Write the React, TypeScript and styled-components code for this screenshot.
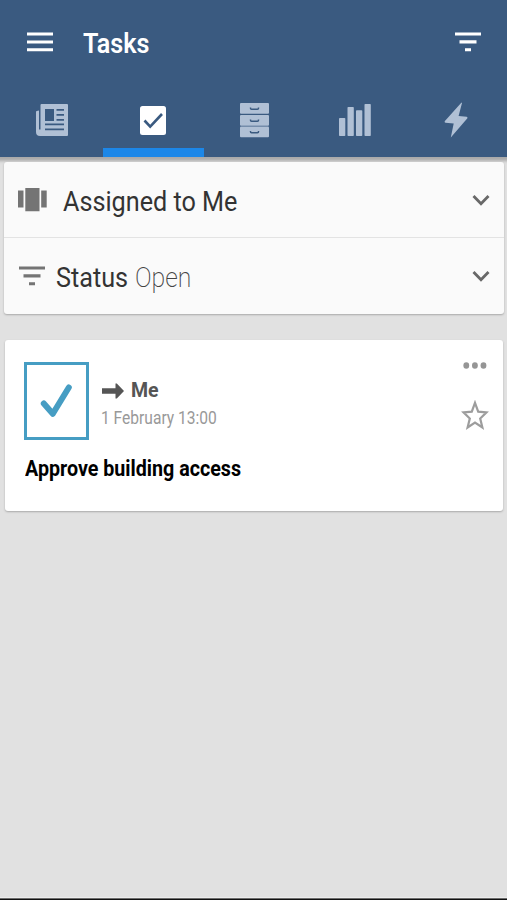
import React from "react";
import styled, { createGlobalStyle } from "styled-components";

const GlobalStyle = createGlobalStyle`
  *, *::before, *::after { box-sizing: border-box; }
  html, body { margin: 0; background: #e1e1e1; }
  body { font-family: Roboto, "Liberation Sans", sans-serif; }
  button { border: 0; padding: 0; background: none; font: inherit; color: inherit; }
  svg { display: block; flex: none; }
`;

const Screen = styled.div`
  display: flex;
  flex-direction: column;
  width: 507px;
  height: 900px;
  overflow: hidden;
  background: #e1e1e1;
`;

const Header = styled.header`
  flex: none;
  height: 157px;
  display: flex;
  flex-direction: column;
  background: #3a5a80;
  box-shadow: 0 1px 3px 3px #aaaaaa;
`;

const Toolbar = styled.div`
  height: 83px;
  padding: 0 26px 0 27px;
  display: flex;
  align-items: center;
`;

const IconButton = styled.button`
  display: grid;
  place-items: center;
`;

const Label = styled.span<{ $size: number; $stretch: number; $weight?: number; $color: string }>`
  display: block;
  white-space: nowrap;
  font-size: ${(p) => p.$size}px;
  line-height: 1.2;
  font-weight: ${(p) => p.$weight ?? 400};
  color: ${(p) => p.$color};
  transform: scaleX(${(p) => p.$stretch});
  transform-origin: left center;
`;

const Title = styled.h1`
  flex: 1;
  margin: 3px 0 0 30px;
`;

const Tabs = styled.nav`
  flex: 1;
  padding-left: 2px;
  display: grid;
  grid-template-columns: repeat(5, 101px);
`;

const Tab = styled.button<{ $active?: boolean }>`
  display: grid;
  place-items: center;
  border-bottom: 9px solid ${(p) => (p.$active ? "#1c87e8" : "transparent")};
  padding: 9px 1px 0 0;
  color: ${(p) => (p.$active ? "#ffffff" : "#b0c0d5")};
`;

const Filters = styled.section`
  flex: none;
  margin: 5px 3px 0 4px;
  height: 152px;
  border-radius: 3px;
  background: #fafafa;
  box-shadow: 0 1px 2px #a8a8a8;
`;

const FilterRow = styled.div<{ $inset: number }>`
  height: 76px;
  display: flex;
  align-items: center;
  padding: 0 14px 0 ${(p) => p.$inset}px;
  & + & {
    height: 77px;
    margin-top: -1px;
    border-top: 1px solid #e3e3e3;
  }
`;

const FilterText = styled.div<{ $gap: number }>`
  flex: 1;
  display: flex;
  margin: 3px 0 0 ${(p) => p.$gap}px;
`;

const StatusName = styled.div`
  width: 79px;
`;

const TaskCard = styled.article`
  flex: none;
  margin: 26px 4px 0 5px;
  height: 171px;
  padding: 22px 15px 0 19px;
  border-radius: 3px;
  background: #ffffff;
  box-shadow: 0 1px 2px #a8a8a8;
`;

const TaskTop = styled.div`
  height: 78px;
  display: flex;
`;

const TaskType = styled.div`
  width: 65px;
  height: 78px;
  border: 3px solid #469dc3;
  display: grid;
  place-items: center;
`;

const TaskInfo = styled.div`
  flex: 1;
  padding: 17px 0 0 12px;
`;

const Assignee = styled.div`
  display: flex;
  align-items: center;
  gap: 7px;
  height: 24px;
  padding-left: 1px;
`;

const TaskDate = styled.div`
  margin-top: 5px;
`;

const Actions = styled.div`
  width: 26px;
  display: flex;
  flex-direction: column;
  align-items: center;
  gap: 31px;
`;

const TaskTitle = styled.h2`
  margin: 16px 0 0 1px;
`;

const BottomEdge = styled.div`
  flex: none;
  height: 3px;
  margin-top: auto;
  background: linear-gradient(#ececec 0 1px, #6c6c6c 1px 2px, #111111 2px);
`;

const FilterIcon = ({ color }: { color: string }) => (
  <svg width="26" height="20" viewBox="0 0 26 20" fill={color}>
    <path d="M0 .5h26v3H0zM4.5 8.300h17v3.200h-17zM10 16.200h6v3h-6z" />
  </svg>
);

const Chevron = () => (
  <svg width="18" height="13" viewBox="0 0 18 13" fill="none" stroke="#686868" strokeWidth="2.8">
    <path d="M1.500 2 9 9.800 16.500 2" />
  </svg>
);

const NewsIcon = () => (
  <svg width="32" height="32" viewBox="0 0 32 32" fill="currentColor">
    <path
      fillRule="evenodd"
      d="M5.500 0H31q1 0 1 1v30q0 1-1 1H4Q0 32 0 28V8Q0 6.500 3 6.500V25.500H4.500V1q0-1 1-1ZM9 5V17h9V5ZM20.500 5v1.800H28V5ZM20.500 10v1.800H28V10ZM20.500 15v1.800H28V15ZM9 19.500v1.800H28v-1.800ZM9 24.500v1.800H28v-1.800Z"
    />
  </svg>
);

const CheckIcon = () => (
  <svg width="26" height="29" viewBox="0 0 26 29">
    <rect width="26" height="29" rx="2.500" fill="currentColor" />
    <path d="m4.500 14.500 5.700 6.200L22 8" fill="none" stroke="#3a5a80" strokeWidth="2.600" />
  </svg>
);

const DrawersIcon = () => (
  <svg width="29" height="35" viewBox="0 0 29 35">
    {[0, 12, 23.5].map((y) => (
      <g key={y} transform={`translate(0 ${y})`}>
        <rect width="29" height="10.700" rx="1" fill="currentColor" />
        <path d="M10.500 4.600v.6q0 1 1 1h6q1 0 1-1v-.6" fill="none" stroke="#3a5a80" strokeWidth="1.500" />
      </g>
    ))}
  </svg>
);

const BarsIcon = () => (
  <svg width="32" height="32" viewBox="0 0 32 32" fill="currentColor">
    <rect y="14" width="6.300" height="18" rx=".8" />
    <rect x="8.500" y="3" width="6.300" height="29" rx=".8" />
    <rect x="17" y="6.300" width="6.300" height="25.700" rx=".8" />
    <rect x="25.500" width="6.300" height="32" rx=".8" />
  </svg>
);

const BoltIcon = () => (
  <svg width="24" height="36" viewBox="0 0 24 36" fill="currentColor">
    <path d="M17.500.5.700 19.200q-.4 1.300.8 1.600l8.200.7L6.800 35.500 23.400 16.300q.4-1.200-.8-1.500l-8-.7L18 1Z" />
  </svg>
);

const CarouselIcon = () => (
  <svg width="29" height="25" viewBox="0 0 29 25" fill="#747474">
    <path d="M0 2.500h5.500v17H0zM7.300-.400h14.200v23.700H7.300zM23.200 2.500h5.500v17h-5.500z" />
  </svg>
);

const MenuIcon = () => (
  <svg width="26" height="20" viewBox="0 0 26 20" fill="#fff">
    <path d="M0 .5h26v3H0zM0 8.400h26v3H0zM0 16.200h26v3H0z" />
  </svg>
);

const TaskCheck = () => (
  <svg width="34" height="36" viewBox="0 0 34 36" fill="none" stroke="#469dc3">
    <path d="m3.800 20.500 9 10.300L28.800 4.500" strokeWidth="6" strokeLinecap="round" strokeLinejoin="round" />
  </svg>
);

const ArrowIcon = () => (
  <svg width="22" height="16" viewBox="0 0 22 16" fill="#555">
    <path d="M0 5.200h13.500V.5h1.300L22 8l-7.200 7.500h-1.300v-4.700H0z" />
  </svg>
);

const StarIcon = () => (
  <svg width="28" height="30" viewBox="0 0 28 30" fill="none" stroke="#9d9d9d" strokeWidth="2.200">
    <path d="m14 2.800 3.200 8.800 8.300.7-6.300 6.200 2.200 9L14 22.600l-7.400 4.900 2.200-9-6.300-6.200 8.300-.7Z" />
  </svg>
);

const DotsIcon = () => (
  <svg width="24" height="7" viewBox="0 0 24 7" fill="#959595">
    <ellipse cx="3.300" cy="3.500" rx="2.900" ry="3.200" />
    <ellipse cx="11.900" cy="3.500" rx="2.900" ry="3.200" />
    <ellipse cx="20.500" cy="3.500" rx="2.900" ry="3.200" />
  </svg>
);

export default function App() {
  return (
    <>
      <GlobalStyle />
      <Screen>
        <Header>
          <Toolbar>
            <IconButton aria-label="Menu"><MenuIcon /></IconButton>
            <Title><Label $size={27.5} $stretch={0.915} $weight={600} $color="#fff">Tasks</Label></Title>
            <IconButton aria-label="Filter"><FilterIcon color="#fff" /></IconButton>
          </Toolbar>
          <Tabs>
            <Tab aria-label="News"><NewsIcon /></Tab>
            <Tab aria-label="Tasks" $active><CheckIcon /></Tab>
            <Tab aria-label="Files"><DrawersIcon /></Tab>
            <Tab aria-label="Reports"><BarsIcon /></Tab>
            <Tab aria-label="Actions"><BoltIcon /></Tab>
          </Tabs>
        </Header>
        <Filters>
          <FilterRow $inset={14}>
            <CarouselIcon />
            <FilterText $gap={16}>
              <Label $size={28} $stretch={0.9} $color="#333">Assigned to Me</Label>
            </FilterText>
            <Chevron />
          </FilterRow>
          <FilterRow $inset={15}>
            <FilterIcon color="#747474" />
            <FilterText $gap={11}>
              <StatusName><Label $size={28} $stretch={0.9} $color="#333">Status</Label></StatusName>
              <Label $size={28} $stretch={0.885} $weight={200} $color="#444">Open</Label>
            </FilterText>
            <Chevron />
          </FilterRow>
        </Filters>
        <TaskCard>
          <TaskTop>
            <TaskType><TaskCheck /></TaskType>
            <TaskInfo>
              <Assignee>
                <ArrowIcon />
                <Label $size={21} $stretch={0.93} $weight={700} $color="#555">Me</Label>
              </Assignee>
              <TaskDate><Label $size={17.5} $stretch={0.89} $color="#999">1 February 13:00</Label></TaskDate>
            </TaskInfo>
            <Actions>
              <IconButton aria-label="More"><DotsIcon /></IconButton>
              <IconButton aria-label="Favourite"><StarIcon /></IconButton>
            </Actions>
          </TaskTop>
          <TaskTitle><Label $size={21.5} $stretch={0.915} $weight={700} $color="#000">Approve building access</Label></TaskTitle>
        </TaskCard>
        <BottomEdge />
      </Screen>
    </>
  );
}
